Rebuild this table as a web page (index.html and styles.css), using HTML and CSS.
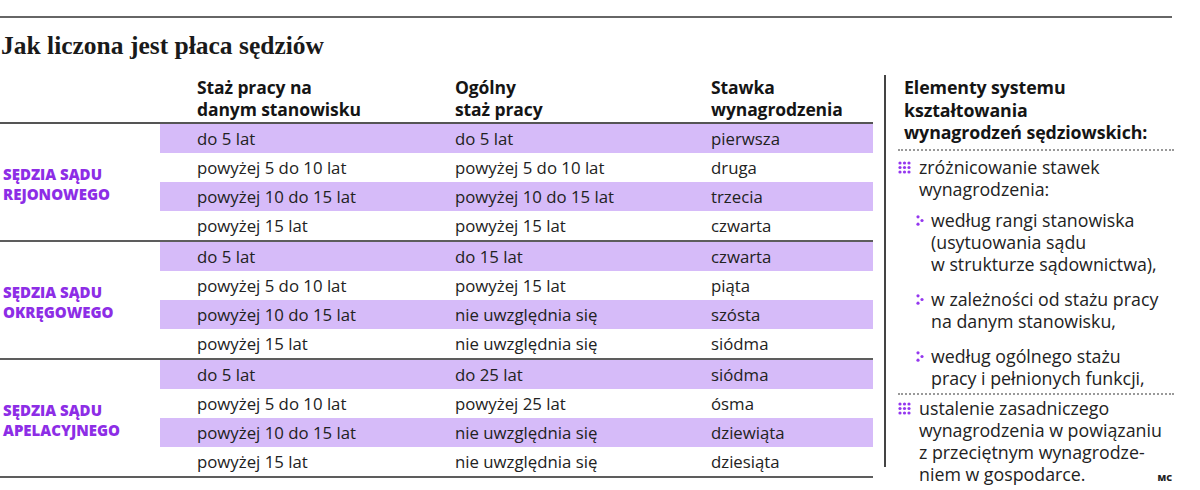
FILE: index.html
```html
<!DOCTYPE html>
<html lang="pl">
<head>
<meta charset="utf-8">
<title>Jak liczona jest płaca sędziów</title>
<link rel="stylesheet" href="styles.css">
</head>
<body>
<div class="rule"></div>
<h1 class="title">Jak liczona jest płaca sędziów</h1>
<div class="main">
  <div class="table">
    <div class="thead">
      <div class="th th-blank"></div>
      <div class="th th-c1">Staż pracy na<br>danym stanowisku</div>
      <div class="th th-c2">Ogólny<br>staż pracy</div>
      <div class="th th-c3">Stawka<br>wynagrodzenia</div>
    </div>
    <div class="group">
      <div class="label">SĘDZIA SĄDU<br>REJONOWEGO</div>
      <div class="rows">
        <div class="row alt"><span class="c1">do 5 lat</span><span class="c2">do 5 lat</span><span class="c3">pierwsza</span></div>
        <div class="row"><span class="c1">powyżej 5 do 10 lat</span><span class="c2">powyżej 5 do 10 lat</span><span class="c3">druga</span></div>
        <div class="row alt"><span class="c1">powyżej 10 do 15 lat</span><span class="c2">powyżej 10 do 15 lat</span><span class="c3">trzecia</span></div>
        <div class="row"><span class="c1">powyżej 15 lat</span><span class="c2">powyżej 15 lat</span><span class="c3">czwarta</span></div>
      </div>
    </div>
    <div class="group">
      <div class="label">SĘDZIA SĄDU<br>OKRĘGOWEGO</div>
      <div class="rows">
        <div class="row alt"><span class="c1">do 5 lat</span><span class="c2">do 15 lat</span><span class="c3">czwarta</span></div>
        <div class="row"><span class="c1">powyżej 5 do 10 lat</span><span class="c2">powyżej 15 lat</span><span class="c3">piąta</span></div>
        <div class="row alt"><span class="c1">powyżej 10 do 15 lat</span><span class="c2">nie uwzględnia się</span><span class="c3">szósta</span></div>
        <div class="row"><span class="c1">powyżej 15 lat</span><span class="c2">nie uwzględnia się</span><span class="c3">siódma</span></div>
      </div>
    </div>
    <div class="group">
      <div class="label">SĘDZIA SĄDU<br>APELACYJNEGO</div>
      <div class="rows">
        <div class="row alt"><span class="c1">do 5 lat</span><span class="c2">do 25 lat</span><span class="c3">siódma</span></div>
        <div class="row"><span class="c1">powyżej 5 do 10 lat</span><span class="c2">powyżej 25 lat</span><span class="c3">ósma</span></div>
        <div class="row alt"><span class="c1">powyżej 10 do 15 lat</span><span class="c2">nie uwzględnia się</span><span class="c3">dziewiąta</span></div>
        <div class="row"><span class="c1">powyżej 15 lat</span><span class="c2">nie uwzględnia się</span><span class="c3">dziesiąta</span></div>
      </div>
    </div>
  </div>
  <aside class="aside">
    <h2 class="aside-title">Elementy systemu<br>kształtowania<br>wynagrodzeń sędziowskich:</h2>
    <div class="item first">
      <svg class="grid9" width="13" height="13" viewBox="0 0 13 13" aria-hidden="true">
        <g fill="#9437ef">
          <circle cx="2" cy="2" r="1.6"/><circle cx="6.5" cy="2" r="1.6"/><circle cx="11" cy="2" r="1.6"/>
          <circle cx="2" cy="6.5" r="1.6"/><circle cx="6.5" cy="6.5" r="1.6"/><circle cx="11" cy="6.5" r="1.6"/>
          <circle cx="2" cy="11" r="1.6"/><circle cx="6.5" cy="11" r="1.6"/><circle cx="11" cy="11" r="1.6"/>
        </g>
      </svg>
      <div class="txt">
        zróżnicowanie stawek<br>wynagrodzenia:
        <div class="sub">
          <svg class="tri" width="8" height="11" viewBox="0 0 8 11" aria-hidden="true"><g fill="#9437ef"><circle cx="2" cy="1.8" r="1.6"/><circle cx="6" cy="5.5" r="1.6"/><circle cx="2" cy="9.2" r="1.6"/></g></svg>
          <div class="subtxt">według rangi stanowiska<br>(usytuowania sądu<br>w strukturze sądownictwa),</div>
        </div>
        <div class="sub">
          <svg class="tri" width="8" height="11" viewBox="0 0 8 11" aria-hidden="true"><g fill="#9437ef"><circle cx="2" cy="1.8" r="1.6"/><circle cx="6" cy="5.5" r="1.6"/><circle cx="2" cy="9.2" r="1.6"/></g></svg>
          <div class="subtxt">w zależności od stażu pracy<br>na danym stanowisku,</div>
        </div>
        <div class="sub">
          <svg class="tri" width="8" height="11" viewBox="0 0 8 11" aria-hidden="true"><g fill="#9437ef"><circle cx="2" cy="1.8" r="1.6"/><circle cx="6" cy="5.5" r="1.6"/><circle cx="2" cy="9.2" r="1.6"/></g></svg>
          <div class="subtxt">według ogólnego stażu<br>pracy i pełnionych funkcji,</div>
        </div>
      </div>
    </div>
    <div class="item second">
      <svg class="grid9" width="13" height="13" viewBox="0 0 13 13" aria-hidden="true">
        <g fill="#9437ef">
          <circle cx="2" cy="2" r="1.6"/><circle cx="6.5" cy="2" r="1.6"/><circle cx="11" cy="2" r="1.6"/>
          <circle cx="2" cy="6.5" r="1.6"/><circle cx="6.5" cy="6.5" r="1.6"/><circle cx="11" cy="6.5" r="1.6"/>
          <circle cx="2" cy="11" r="1.6"/><circle cx="6.5" cy="11" r="1.6"/><circle cx="11" cy="11" r="1.6"/>
        </g>
      </svg>
      <div class="txt">
        ustalenie zasadniczego<br>wynagrodzenia w powiązaniu<br>z przeciętnym wynagrodze-
        <div class="lastline"><span>niem w gospodarce.</span><span class="mc">MC</span></div>
      </div>
    </div>
  </aside>
</div>
</body>
</html>
```
FILE: styles.css
```css
* { box-sizing: border-box; }
html, body { margin: 0; padding: 0; background: #fff; }
body {
  width: 1200px;
  height: 490px;
  overflow: hidden;
  font-family: "Open Sans", Lato, sans-serif;
  color: #222;
}
.rule {
  margin-top: 16px;
  width: 1172px;
  height: 2px;
  background: #666;
}
.title {
  margin: 13px 0 0 1px;
  font-family: "Liberation Serif", serif;
  font-weight: 700;
  font-size: 25.5px;
  line-height: 30px;
  letter-spacing: 0;
  color: #1a1a1a;
}
.main {
  display: flex;
  margin-top: 14px;
}
.table { width: 873px; }
.thead {
  display: grid;
  grid-template-columns: 197px 258px 256px 1fr;
  height: 49px;
  border-bottom: 2px solid #555;
  font-weight: 700;
  font-size: 17.5px;
  line-height: 22px;
  color: #151515;
}
.th { padding-top: 1px; letter-spacing: -0.1px; }
.group {
  display: flex;
  border-bottom: 2px solid #5d5d5d;
}
.label {
  width: 160px;
  display: flex;
  align-items: center;
  padding-left: 3px;
  padding-top: 3px;
  font-weight: 800;
  font-size: 15px;
  line-height: 20px;
  color: #8d2de6;
}
.rows { flex: 1; }
.row {
  display: grid;
  grid-template-columns: 295px 256px 1fr;
  height: 29px;
  align-items: center;
  font-size: 16.8px;
  color: #222;
}
.row.alt { background: #d6bbf9; }
.c1 { padding-left: 37px; }
.aside {
  margin-left: 11px;
  border-left: 2px solid #444;
  padding-left: 12px;
  width: 302px;
  height: 392px;
}
.aside-title {
  margin: 0;
  padding: 1px 0 0 6px;
  font-size: 17.8px;
  font-weight: 700;
  line-height: 22.5px;
  letter-spacing: -0.1px;
  color: #151515;
  padding-bottom: 5px;
  border-bottom: 2px dotted #999;
  width: 276px;
}
.item {
  display: flex;
  align-items: flex-start;
  font-size: 17.8px;
  line-height: 22px;
  color: #222;
}
.item.first {
  padding: 5px 0 4px 0;
  border-bottom: 2px dotted #999;
  width: 276px;
}
.item.second { padding-top: 2px; width: 276px; }
.grid9 { flex: none; margin-top: 5px; margin-right: 8px; }
.txt { flex: 1; white-space: nowrap; }
.sub {
  display: flex;
  align-items: flex-start;
  margin-top: 9px;
}
.sub + .sub { margin-top: 13px; }
.tri { flex: none; margin-top: 6px; margin-right: 7px; margin-left: -3px; }
.lastline {
  display: flex;
  justify-content: space-between;
  align-items: baseline;
}
.mc {
  font-size: 9px;
  font-weight: 800;
  color: #222;
  margin-right: 2px;
}
```
